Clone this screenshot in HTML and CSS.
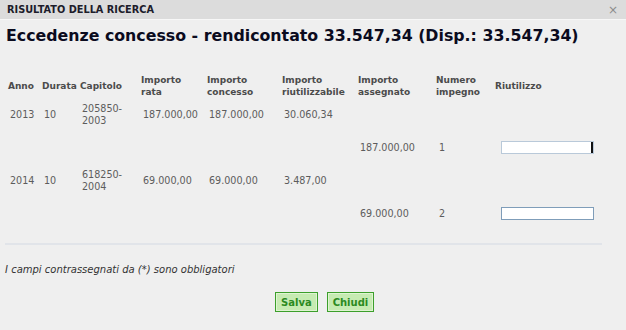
FILE: index.html
```html
<!DOCTYPE html>
<html lang="it">
<head>
    <meta charset="UTF-8">
    <meta name="viewport" content="width=device-width, initial-scale=1.0">
    <title>Risultato della ricerca</title>
    <link rel="stylesheet" href="styles.css">
</head>
<body>
    <div class="dialog">
        <div class="titlebar">
            <span class="title">RISULTATO DELLA RICERCA</span>
            <span class="close">&times;</span>
        </div>

        <div class="content">
            <h1 class="heading">Eccedenze concesso - rendicontato 33.547,34 (Disp.: 33.547,34)</h1>

            <table class="results">
                <colgroup>
                    <col class="c-anno">
                    <col class="c-durata">
                    <col class="c-capitolo">
                    <col class="c-rata">
                    <col class="c-concesso">
                    <col class="c-riut">
                    <col class="c-assegnato">
                    <col class="c-numero">
                    <col class="c-riutilizzo">
                </colgroup>
                <thead>
                    <tr>
                        <th>Anno</th>
                        <th>Durata</th>
                        <th>Capitolo</th>
                        <th>Importo<br>rata</th>
                        <th>Importo<br>concesso</th>
                        <th>Importo<br>riutilizzabile</th>
                        <th>Importo<br>assegnato</th>
                        <th>Numero<br>impegno</th>
                        <th>Riutilizzo</th>
                    </tr>
                </thead>
                <tbody>
                    <tr>
                        <td>2013</td>
                        <td>10</td>
                        <td>205850-<br>2003</td>
                        <td>187.000,00</td>
                        <td>187.000,00</td>
                        <td>30.060,34</td>
                        <td></td>
                        <td></td>
                        <td></td>
                    </tr>
                    <tr>
                        <td colspan="6"></td>
                        <td>187.000,00</td>
                        <td class="num">1</td>
                        <td><input type="text" class="reuse is-focused"></td>
                    </tr>
                    <tr>
                        <td>2014</td>
                        <td>10</td>
                        <td>618250-<br>2004</td>
                        <td>69.000,00</td>
                        <td>69.000,00</td>
                        <td>3.487,00</td>
                        <td></td>
                        <td></td>
                        <td></td>
                    </tr>
                    <tr>
                        <td colspan="6"></td>
                        <td>69.000,00</td>
                        <td class="num">2</td>
                        <td><input type="text" class="reuse"></td>
                    </tr>
                </tbody>
            </table>

            <div class="divider"></div>

            <p class="note">I campi contrassegnati da (*) sono obbligatori</p>

            <div class="actions">
                <button class="btn">Salva</button>
                <button class="btn">Chiudi</button>
            </div>
        </div>
    </div>
</body>
</html>
```

FILE: styles.css
```css
* {
    margin: 0;
    padding: 0;
    box-sizing: border-box;
}

body {
    font-family: "DejaVu Sans", Verdana, sans-serif;
    background-color: #efefef;
    color: #5a5a5a;
}

.dialog {
    width: 626px;
    height: 330px;
    background: #efefef;
}

.titlebar {
    height: 20px;
    background: #dcdcdc;
    border-bottom: 1px solid #f7f7f7;
    display: flex;
    justify-content: space-between;
    padding: 0 8px 0 7px;
}

.title {
    font-size: 9.75px;
    font-weight: bold;
    line-height: 19px;
    color: #1d1d2b;
}

.close {
    font-size: 12px;
    line-height: 21px;
    color: #8c8c8c;
}

.content {
    padding: 0 24px 0 5px;
}

.heading {
    margin: 6px 0 0 1px;
    font-size: 15.8px;
    line-height: 19px;
    font-weight: bold;
    color: #0b0b1e;
}

.results {
    width: 597px;
    margin-top: 29px;
    border-collapse: collapse;
    table-layout: fixed;
}

.c-anno { width: 34px; }
.c-durata { width: 38px; }
.c-capitolo { width: 61px; }
.c-rata { width: 66px; }
.c-concesso { width: 75px; }
.c-riut { width: 76px; }
.c-assegnato { width: 78px; }
.c-numero { width: 59px; }
.c-riutilizzo { width: 110px; }

.results th {
    height: 24px;
    padding: 0 0 0 3px;
    font-size: 9px;
    line-height: 12px;
    font-weight: bold;
    text-align: left;
    vertical-align: middle;
    color: #4b4b4b;
}

.results td {
    height: 33px;
    padding: 0 0 0 5px;
    font-size: 9.6px;
    line-height: 12px;
    vertical-align: middle;
    white-space: nowrap;
    color: #5c5c5c;
}

.results td.num {
    padding-left: 6px;
}

.reuse {
    display: block;
    width: 93px;
    height: 13px;
    margin-left: 4px;
    border: 1px solid #7f9db9;
    background: #fff;
    outline: none;
}

/* campo attivo con il cursore */
.reuse.is-focused {
    border-color: #b9c9d9;
    box-shadow: inset -2px 0 0 #111;
}

.divider {
    height: 2px;
    margin-top: 13px;
    background: #e1e4e9;
}

.note {
    margin-top: 19px;
    font-size: 10px;
    line-height: 12px;
    font-style: italic;
    color: #333;
}

.actions {
    display: flex;
    gap: 9px;
    margin-top: 16px;
    padding-left: 270px;
}

.btn {
    height: 20px;
    padding: 0 5px;
    font-family: "DejaVu Sans", Verdana, sans-serif;
    font-size: 10px;
    font-weight: bold;
    color: #2b8a1f;
    background: #c6ebb2;
    border: 1px solid #3c9f2b;
    box-shadow: inset 0 0 0 1px #dff4d2;
    cursor: pointer;
}
```
